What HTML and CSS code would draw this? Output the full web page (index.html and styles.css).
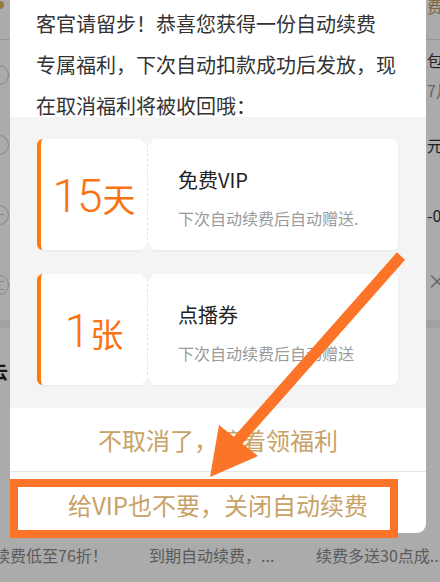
FILE: index.html
```html
<!DOCTYPE html>
<html lang="zh-CN">
<head>
<meta charset="utf-8">
<title>自动续费</title>
<link rel="stylesheet" href="styles.css">
</head>
<body>
<div class="page">
  <div class="row row-top"><span class="cell-l"><span class="dot"></span></span><span class="cell-r gold">费用</span></div>
  <div class="row"><span class="cell-l"><span class="ring"></span></span><span class="cell-r"><span class="dark">包月</span><span class="light">7月</span></span></div>
  <div class="row"><span class="cell-l"><span class="ring"></span></span><span class="cell-r"><span class="dark">元</span></span></div>
  <div class="row"><span class="cell-l"><span class="ring ring-minus"></span></span><span class="cell-r"><span class="dark">-0</span></span></div>
  <div class="row"><span class="cell-l"><span class="ring ring-list"></span></span><span class="cell-r"><span class="light x">×</span></span></div>
  <div class="band"></div>
  <div class="section"><span class="sec-title">云</span></div>
  <div class="tabs">
    <span class="tab t1">续费低至76折！</span>
    <span class="tab t2">到期自动续费，...</span>
    <span class="tab t3">续费多送30点成...</span>
  </div>
</div>

<div class="mask"></div>

<div class="dialog">
  <p class="intro">客官请留步！恭喜您获得一份自动续费<br>专属福利，下次自动扣款成功后发放，现<br>在取消福利将被收回哦：</p>
  <div class="gifts">
    <div class="card">
      <div class="amount"><span class="amt"><span class="num">15</span><span class="unit">天</span></span></div>
      <div class="info">
        <div class="title">免费VIP</div>
        <div class="desc">下次自动续费后自动赠送.</div>
      </div>
    </div>
    <div class="card">
      <div class="amount"><span class="amt"><span class="num">1</span><span class="unit">张</span></span></div>
      <div class="info">
        <div class="title">点播券</div>
        <div class="desc">下次自动续费后自动赠送</div>
      </div>
    </div>
  </div>
  <div class="btn btn-keep">不取消了，接着领福利</div>
  <div class="btn btn-close">给VIP也不要，关闭自动续费</div>
</div>

<div class="highlight"></div>

<svg class="arrow" width="440" height="582" viewBox="0 0 440 582" xmlns="http://www.w3.org/2000/svg">
  <line x1="401" y1="256" x2="234" y2="445" stroke="#fb7427" stroke-width="11"/>
  <polygon points="210,477 219,425 258,456" fill="#fb7427"/>
</svg>
</body>
</html>
```

FILE: styles.css
```css
* { box-sizing: border-box; }
html, body { margin: 0; padding: 0; }
body {
  width: 440px;
  height: 582px;
  overflow: hidden;
  position: relative;
  background: #fff;
  font-family: "Noto Sans CJK SC", "Noto Sans", sans-serif;
}

/* underlying page */
.page {
  height: 582px;
  display: flex;
  flex-direction: column;
}
.row {
  display: grid;
  grid-template-columns: 427px 1fr;
  align-items: center;
  height: 70px;
  flex: none;
}
.row-top {
  height: 40px;
  align-items: start;
  border-bottom: 1px solid #e2e2e2;
}
.cell-l { position: relative; height: 100%; display: flex; align-items: center; }
.cell-r { white-space: nowrap; display: flex; flex-direction: column; font-size: 16px; line-height: 20px; }
.gold { color: #b9955a; margin-top: -4px; }
.dark { color: #333; }
.light { color: #999; margin-top: 10px; }
.x { font-size: 20px; margin-top: -8px; }
.dot {
  width: 8px; height: 8px; border-radius: 50%;
  background: #e2b65a;
  margin-left: -4px;
  align-self: flex-start;
  margin-top: 1px;
}
.ring {
  width: 20px; height: 20px; border-radius: 50%;
  border: 1.5px solid #c8c8c8;
  margin-left: -11px;
  position: relative;
}
.ring-minus::after {
  content: "";
  position: absolute;
  left: 4px; right: 4px; top: 8px;
  border-top: 1.5px solid #c8c8c8;
}
.ring-list::after {
  content: "";
  position: absolute;
  left: 4px; right: 4px; top: 5px; height: 7px;
  border-top: 1.5px solid #c8c8c8;
  border-bottom: 1.5px solid #c8c8c8;
}
.band { height: 8px; background: #f0f0f0; flex: none; }
.section { height: 216px; flex: none; padding-top: 30px; }
.sec-title { font-size: 18px; font-weight: bold; color: #222; margin-left: -10px; }
.tabs {
  display: flex;
  white-space: nowrap;
  font-size: 16px;
  color: #888;
  line-height: 22px;
  margin-left: -6px;
}
.tab { overflow: hidden; flex: none; }
.t1 { width: 155px; }
.t2 { width: 167px; }
.t3 { width: 140px; }

/* dim layer */
.mask {
  position: absolute;
  inset: 0;
  background: rgba(0, 0, 0, 0.33);
}

/* dialog */
.dialog {
  position: absolute;
  left: 10px;
  top: 0;
  width: 416px;
  height: 533px;
  background: #fff;
  border-radius: 0 0 9px 9px;
  overflow: hidden;
  display: flex;
  flex-direction: column;
}
.intro {
  margin: 0;
  height: 117px;
  padding: 3px 0 0 26px;
  font-size: 20px;
  line-height: 41px;
  color: #333;
  white-space: nowrap;
  flex: none;
}
.gifts {
  background: #f4f4f4;
  padding: 22px 28px 23px 27px;
  display: flex;
  flex-direction: column;
  gap: 24px;
  flex: none;
}
.card {
  display: flex;
  height: 111px;
  background: #fff;
  border-radius: 6px;
  border-left: 4px solid #ff7a0c;
  box-shadow: 0 1px 2px rgba(0, 0, 0, 0.05);
}
.amount {
  width: 107px;
  flex: none;
  display: flex;
  align-items: center;
  justify-content: center;
  border-right: 1px dashed #e4e4e4;
  position: relative;
}
.amount::before,
.amount::after {
  content: "";
  position: absolute;
  right: -6px;
  width: 11px;
  height: 11px;
  border-radius: 50%;
  background: #f4f4f4;
}
.amount::before { top: -6px; }
.amount::after { bottom: -6px; }
.amt {
  color: #fb7212;
  white-space: nowrap;
  padding-top: 3px;
}
.num {
  font-family: Roboto, "Noto Sans", sans-serif;
  font-weight: 300;
  font-size: 46px;
  letter-spacing: -1px;
}
.unit {
  font-size: 33px;
  margin-left: 1px;
}
.info {
  display: flex;
  flex-direction: column;
  justify-content: center;
  padding: 7px 0 0 30px;
}
.title {
  font-size: 20px;
  line-height: 24px;
  color: #222;
}
.desc {
  font-size: 16px;
  line-height: 20px;
  color: #9b9b9b;
  margin-top: 16px;
  white-space: nowrap;
}
.btn {
  flex: none;
  display: flex;
  align-items: center;
  justify-content: center;
  font-size: 24px;
  color: #c8a266;
  white-space: nowrap;
}
.btn-keep {
  height: 64px;
  border-bottom: 1px solid #e6e6e6;
}
.btn-close {
  height: 62px;
  padding-top: 2px;
}

/* annotation overlays */
.highlight {
  position: absolute;
  left: 10px;
  top: 479px;
  width: 388px;
  height: 59px;
  border: 8px solid #fb7427;
}
.arrow {
  position: absolute;
  left: 0;
  top: 0;
  pointer-events: none;
}
```
